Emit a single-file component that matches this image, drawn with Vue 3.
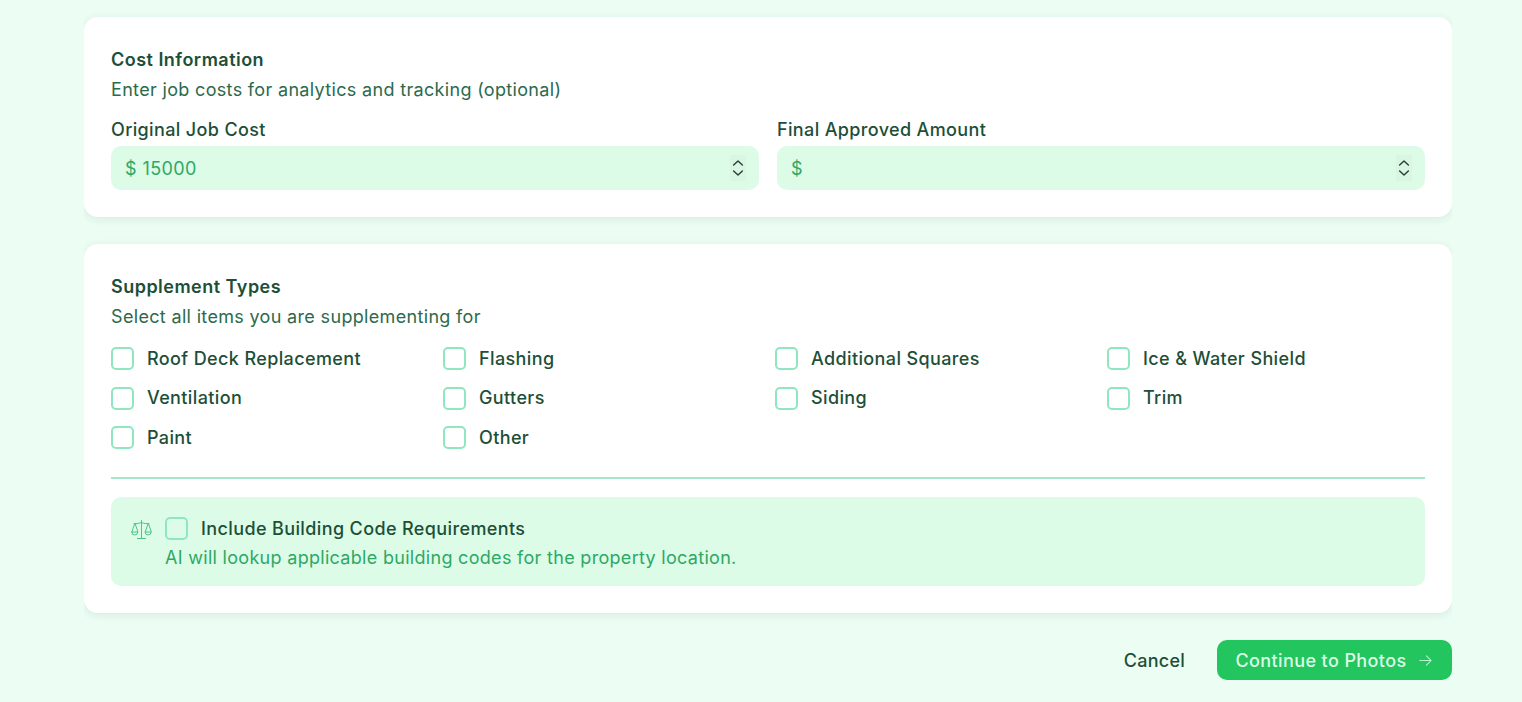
<script setup>
const types = ['Roof Deck Replacement', 'Flashing', 'Additional Squares', 'Ice & Water Shield', 'Ventilation', 'Gutters', 'Siding', 'Trim', 'Paint', 'Other']
</script>

<template>
  <main class="page">
    <section class="card cost">
      <h2 class="title">Cost Information</h2>
      <p class="desc">Enter job costs for analytics and tracking (optional)</p>
      <div class="fields">
        <label class="field">
          <span class="label">Original Job Cost</span>
          <span class="input">
            <span class="value">$ 15000</span>
            <span class="spin-wrap">
              <svg class="spin" viewBox="0 0 16 24" fill="none" stroke="#2a3a32" stroke-width="1.6" stroke-linecap="round" stroke-linejoin="round"><path d="M3 8.500 8 4 13 8.500M3 15.500 8 20 13 15.500"/></svg>
            </span>
          </span>
        </label>
        <label class="field">
          <span class="label">Final Approved Amount</span>
          <span class="input">
            <span class="value">$</span>
            <span class="spin-wrap">
              <svg class="spin" viewBox="0 0 16 24" fill="none" stroke="#2a3a32" stroke-width="1.6" stroke-linecap="round" stroke-linejoin="round"><path d="M3 8.500 8 4 13 8.500M3 15.500 8 20 13 15.500"/></svg>
            </span>
          </span>
        </label>
      </div>
    </section>

    <section class="card types">
      <h2 class="title">Supplement Types</h2>
      <p class="desc">Select all items you are supplementing for</p>
      <div class="grid">
        <div v-for="t in types" :key="t" class="opt">
          <span class="box"></span>
          <span class="opt-text">{{ t }}</span>
        </div>
      </div>
      <hr class="rule" />
      <div class="code">
        <svg class="scale" viewBox="0 0 21 21" fill="none" stroke="#4cc488" stroke-width="1" stroke-linecap="round" stroke-linejoin="round">
          <path d="M10.500 1.500v17.500M6.500 19.500h8M3 4.500c2.800.5 5-.1 7.500-1 2.500.9 4.700 1.500 7.500 1"/>
          <path d="M3.800 4.500 .8 13a3 3 0 0 0 6 0zM17.200 4.500l-3 8.500a3 3 0 0 0 6 0zM.8 13h6M14.200 13h6"/>
        </svg>
        <div class="code-body">
          <div class="code-head">
            <span class="box"></span>
            <span class="opt-text">Include Building Code Requirements</span>
          </div>
          <p class="code-note">AI will lookup applicable building codes for the property location.</p>
        </div>
      </div>
    </section>

    <div class="actions">
      <button class="cancel" type="button">Cancel</button>
      <button class="next" type="button">
        Continue to Photos
        <svg class="arrow" viewBox="0 0 16 16" fill="none" stroke="#b9f5d0" stroke-width="1.1" stroke-linecap="round" stroke-linejoin="round"><path d="M2 8h12M9 3l5 5-5 5"/></svg>
      </button>
    </div>
  </main>
</template>

<style>
html, body { margin: 0; background: #ecfdf3; }
</style>

<style scoped>
.page {
  box-sizing: border-box;
  width: 1368px;
  height: 702px;
  margin-left: 84px;
  padding-top: 17px;
  display: flex;
  flex-direction: column;
  gap: 27px;
  font-family: Inter, "Liberation Sans", sans-serif;
  font-size: 18px;
  letter-spacing: 0.4px;
  overflow: hidden;
}
.card {
  box-sizing: border-box;
  background: #fff;
  border-radius: 14px;
  padding: 0 27px;
  box-shadow: 0 2px 8px rgba(20, 83, 45, 0.1);
}
.cost { height: 200px; padding-top: 31px; }
.types { height: 369px; padding-top: 31px; }
.title { margin: 0; font-size: 18px; line-height: 24px; font-weight: 600; letter-spacing: 0.48px; color: #1d4f38; }
.desc { margin: 6px 0 0; line-height: 24px; color: #2c6a4d; font-size: 18px; letter-spacing: 0.33px; }
.fields { display: grid; grid-template-columns: 1fr 1fr; gap: 18px; margin-top: 16px; }
.field { display: flex; flex-direction: column; gap: 4px; }
.label { line-height: 24px; color: #1d4f38; font-weight: 500; letter-spacing: 0.36px; }
.input {
  height: 44px;
  border-radius: 10px;
  background: #dcfce7;
  display: flex;
  align-items: center;
  justify-content: space-between;
  padding: 0 14px;
  color: #2ea866;
}
.spin-wrap {
  width: 16px;
  height: 26px;
  display: flex;
  align-items: center;
  justify-content: center;
  background: #d9f6e3;
  border-radius: 2px;
  margin-right: -1px;
}
.spin { width: 14px; height: 22px; }
.grid { display: grid; grid-template-columns: repeat(4, 332px); margin-top: 10px; }
.opt { display: flex; align-items: center; gap: 13px; height: 39.500px; }
.box {
  box-sizing: border-box;
  width: 23px;
  height: 23px;
  flex: none;
  border: 2px solid #8fe6c0;
  border-radius: 5px;
  background: #fff;
}
.opt-text { color: #1d4f38; font-weight: 500; line-height: 24px; letter-spacing: 0.38px; }
.rule { border: 0; height: 2px; background: #a3e8cb; margin: 19px 0 18px; }
.code {
  height: 89px;
  box-sizing: border-box;
  background: #dcfce7;
  border-radius: 10px;
  padding: 20px 20px 0;
  display: flex;
  gap: 13px;
}
.scale { width: 21px; height: 21px; margin-top: 2px; flex: none; }
.code .box { background: #dcfce7; }
.code-head { display: flex; align-items: center; gap: 13px; }
.code-note { margin: 5px 0 0; line-height: 24px; color: #2ea866; font-weight: 400; letter-spacing: 0.3px; }
.actions { display: flex; justify-content: flex-end; align-items: center; gap: 32px; }
.cancel, .next { font: inherit; letter-spacing: inherit; border: 0; cursor: pointer; }
.cancel { background: none; color: #1d4f38; font-weight: 500; padding: 0; letter-spacing: 0.25px; }
.next {
  height: 40px;
  width: 235px;
  border-radius: 10px;
  background: #22c55e;
  color: #dcfce7;
  font-weight: 500;
  display: flex;
  align-items: center;
  justify-content: center;
  gap: 11px;
  padding: 0 1px 0 0;
}
.arrow { width: 15px; height: 15px; }
</style>
